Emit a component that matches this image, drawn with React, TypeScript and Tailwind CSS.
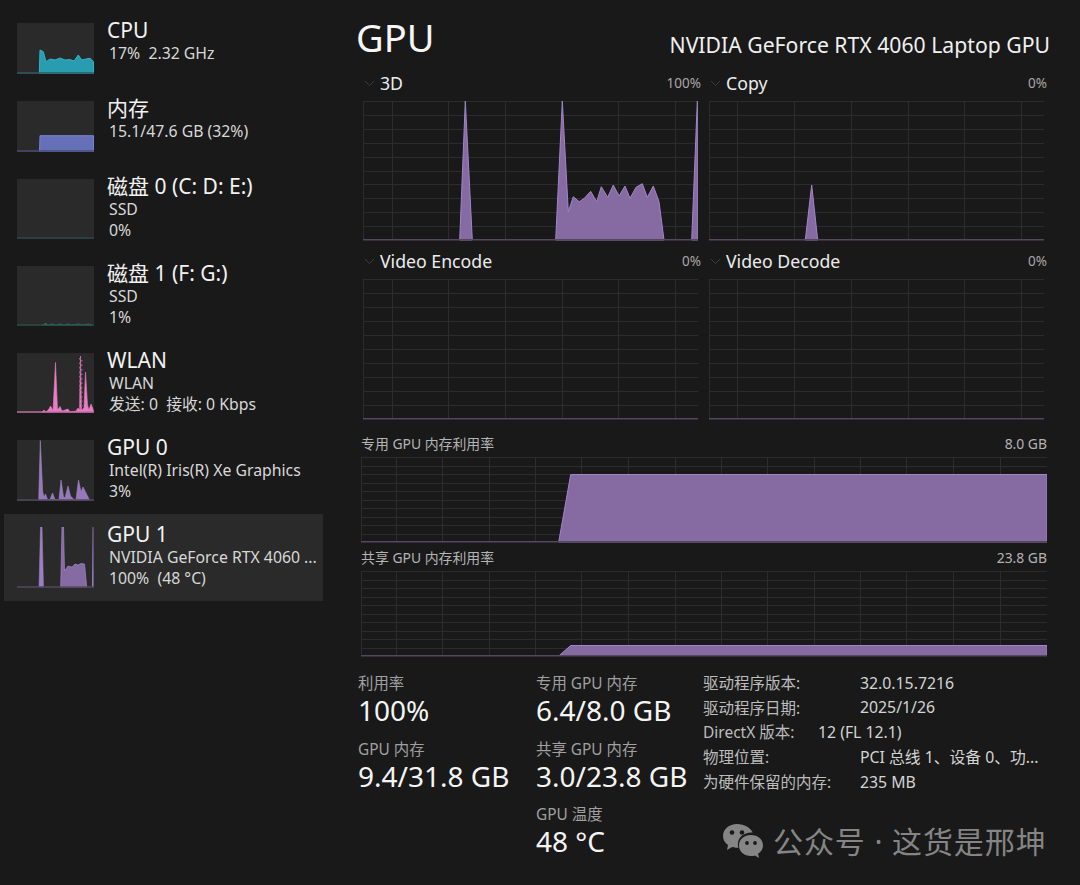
import React from "react";

const V3D = [363.5, 392.5, 448.5, 505.5, 562.5, 618.5, 675.5, 698.5];
const VCP = [709.5, 737.5, 794.5, 851.5, 908.5, 964.5, 1021.5, 1044.5];
const VMEM = [361.5, 396.5, 442.5, 489.5, 535.5, 581.5, 628.5, 675.5, 721.5, 767.5, 814.5, 860.5, 906.5, 953.5, 1000.5, 1047.5];
const hlines = (y0: number, step: number, n: number) =>
  Array.from({ length: n }, (_, i) => Math.round(y0 + step * i) + 0.5);

type Shape = string;

function Chart({ x, y, w, h, vs, hs, shapes = [] }: { x: number; y: number; w: number; h: number; vs: number[]; hs: number[]; shapes?: Shape[] }) {
  const bottom = y + h;
  return (
    <svg width={w} height={h + 1} viewBox={`${x} ${y} ${w} ${h + 1}`} className="block">
      {hs.map((v) => (
        <line key={"h" + v} x1={x} x2={x + w} y1={v} y2={v} stroke="#2c2c2c" strokeWidth="1" />
      ))}
      {vs.map((v) => (
        <line key={"v" + v} x1={v} x2={v} y1={y} y2={bottom} stroke="#2c2c2c" strokeWidth="1" />
      ))}
      {shapes.map((p, i) => (
        <polygon key={i} points={p} fill="#866ba3" stroke="#a185c8" strokeWidth="1" />
      ))}
      <line x1={x} x2={x + w} y1={bottom - 0.2} y2={bottom - 0.2} stroke="#54475f" strokeWidth="1.6" />
    </svg>
  );
}

function Thumb({ y, h, base, children }: { y: number; h: number; base: string; children?: React.ReactNode }) {
  return (
    <svg width={77} height={h} viewBox={`17 ${y} 77 ${h}`} className="block shrink-0 bg-[#2a2a2a]">
      {children}
      <line x1="17" x2="94" y1={y + h - 1} y2={y + h - 1} stroke={base} strokeWidth="1.4" />
    </svg>
  );
}

function Item({ title, lines, h, selected, thumb }: { title: string; lines: string[]; h: string; selected?: boolean; thumb: React.ReactNode }) {
  return (
    <div className={`flex pl-[13px] pt-[13px] ${h} ${selected ? "bg-[#2a2a2a]" : ""}`}>
      {thumb}
      <div className="ml-[13px] flex min-w-0 flex-col">
        <div className="-mt-[6px] h-[26px] text-[21px] leading-[26px] whitespace-nowrap text-[#f2f2f2]">{title}</div>
        {lines.map((l) => (
          <div key={l} className="ml-[2px] h-[20.5px] whitespace-nowrap text-[15.8px] leading-[20px] text-[#d8d8d8]">
            {l}
          </div>
        ))}
      </div>
    </div>
  );
}

function Chevron() {
  return (
    <svg width="11" height="7" viewBox="0 0 11 7" className="mr-[5px] ml-[1px] shrink-0">
      <polyline points="1,1 5.5,5.5 10,1" fill="none" stroke="#3c3c3c" strokeWidth="1" />
    </svg>
  );
}

function ChartHead({ label, value }: { label: string; value: string }) {
  return (
    <div className="-mr-[3px] flex h-[29px] items-center justify-between pb-[7px]">
      <div className="flex items-center text-[17.7px] text-[#ececec]">
        <Chevron />
        {label}
      </div>
      <span className="text-[13.5px] text-[#a8a8a8]">{value}</span>
    </div>
  );
}

function MemHead({ label, value, h }: { label: string; value: string; h: string }) {
  return (
    <div className={`flex ${h} items-end justify-between pb-[4px] text-[13.9px] leading-[18px] text-[#b4b4b4]`}>
      <span>{label}</span>
      <span>{value}</span>
    </div>
  );
}

function Stat({ label, value }: { label: string; value: string }) {
  return (
    <div className="h-[65.5px] whitespace-nowrap pt-[1px]">
      <div className="h-[20px] text-[15.4px] leading-[20px] text-[#a0a0a0]">{label}</div>
      <div className="h-[32px] text-[28px] leading-[32px] text-[#f4f4f4]">{value}</div>
    </div>
  );
}

function InfoRow({ label, value, w }: { label: string; value: string; w: string }) {
  return (
    <div className="flex h-[24.8px] items-center whitespace-nowrap">
      <span className={`${w} shrink-0 text-[15.5px] text-[#bdbdbd]`}>{label}</span>
      <span className="text-[15.8px] text-[#d4d4d4]">{value}</span>
    </div>
  );
}

const P3D = [
  "459.7,240 465.3,101 472.3,240",
  "555.7,240 562.3,101 568.3,211.7 573.3,196.7 579.3,201.7 584.3,198.3 590.7,191.3 596.7,201.7 601.3,186.7 607.7,197.3 613.3,185 619,196 625,186 630,198.3 636,187.3 642.3,183.7 647.3,197.3 653.3,186 659,201.7 664,240",
  "691.7,240 697.3,101 698,101 698,240",
];

export default function App() {
  return (
    <div className="relative flex h-[885px] w-[1080px] overflow-hidden bg-[#191919] font-['Noto_Sans','Noto_Sans_CJK_SC',sans-serif]">
      <nav className="ml-[4px] flex w-[319px] shrink-0 flex-col pt-[10px]">
        <Item
          title="CPU"
          lines={["17%\u00a0\u00a02.32 GHz"]}
          h="h-[78px]"
          thumb={
            <Thumb y={23} h={51} base="#2f5a60">
              <polygon
                points="39.3,74 40,50 43.3,51.7 46,61.7 50,59 55,60 60,58 65,60 70,59.5 74,61 78.3,55 81.7,60 86,59 90,58.3 93.5,61.7 93.5,74"
                fill="#2a9cb0"
                stroke="#30b4cc"
                strokeWidth="1"
              />
            </Thumb>
          }
        />
        <Item
          title="内存"
          lines={["15.1/47.6 GB (32%)"]}
          h="h-[78px]"
          thumb={
            <Thumb y={101} h={51} base="#4a4a78">
              <polygon points="39.5,152 40,135.7 93.5,135.7 93.5,152" fill="#6570b8" stroke="#7583d8" strokeWidth="1" />
            </Thumb>
          }
        />
        <Item title="磁盘 0 (C: D: E:)" lines={["SSD", "0%"]} h="h-[87px]" thumb={<Thumb y={179} h={60} base="#2a4a47" />} />
        <Item
          title="磁盘 1 (F: G:)"
          lines={["SSD", "1%"]}
          h="h-[87px]"
          thumb={
            <Thumb y={266} h={60} base="#2a4a47">
              <polygon
                points="42,325 46,323.5 48,325 52,324 56,325 60,324 64,325 68,324 72,325 78,324 84,325 88,324 92,325"
                fill="#2f8a7c"
                stroke="#2f8a7c"
                strokeWidth="0.8"
              />
            </Thumb>
          }
        />
        <Item
          title="WLAN"
          lines={["WLAN", "发送: 0\u00a0\u00a0接收: 0 Kbps"]}
          h="h-[87px]"
          thumb={
            <Thumb y={353} h={60} base="#c46aa6">
              <polygon
                points="42,412 44,410 46,412 49,409 50.5,406 52,408.5 53,411 55.5,362.5 57.5,410 60,406.5 62,411 68,409 70,412 76,411 78,408 79.5,410 80.5,356 81.5,410 84,408 85.5,372 87.5,405 89,410 91,404 93,409 93.5,412"
                fill="#e87dc4"
                stroke="#e87dc4"
                strokeWidth="0.6"
              />
              <line x1="79.7" x2="79.7" y1="358" y2="410" stroke="#a35a8c" strokeWidth="1.4" strokeDasharray="1.5 3" />
              <line x1="81.8" x2="81.8" y1="360" y2="410" stroke="#a35a8c" strokeWidth="1.4" strokeDasharray="1.5 3" />
            </Thumb>
          }
        />
        <Item
          title="GPU 0"
          lines={["Intel(R) Iris(R) Xe Graphics", "3%"]}
          h="h-[87px]"
          thumb={
            <Thumb y={440} h={61} base="#54475f">
              <polygon
                points="38.7,500 40.3,440.5 42.7,492 44,497 45.5,494 47.5,499.5 50,499.5 52.5,493 55,499.5 59,499.5 61,480 63.5,497 65,498 68,486 70.5,496 74,499.5 76,499.5 78.5,480 81,492 83,487 86,493 89.5,500"
                fill="#9579bb"
                stroke="#a185c8"
                strokeWidth="0.6"
              />
            </Thumb>
          }
        />
        <Item
          title="GPU 1"
          lines={["NVIDIA GeForce RTX 4060 ...", "100%\u00a0\u00a0(48 °C)"]}
          h="h-[87px]"
          selected
          thumb={
            <Thumb y={527} h={61} base="#54475f">
              <polygon points="39,587 40.5,527 42,527 43.5,587" fill="#9b7fc2" stroke="#a185c8" strokeWidth="0.5" />
              <polygon
                points="60.7,587 62,527 63.5,527 64.5,571 68,566 72,567 75,564 78,565 81,563.5 84.5,564 86.7,587"
                fill="#866ba3"
                stroke="#a185c8"
                strokeWidth="0.7"
              />
              <polygon points="92,587 92.6,527 93.4,527 93.6,587" fill="#9b7fc2" />
            </Thumb>
          }
        />
      </nav>

      <main className="flex w-[757px] shrink-0 flex-col">
        <div className="flex h-[72px] items-start justify-between pr-[30px] pl-[33px]">
          <h1 className="mt-[9px] text-[38px] leading-[56px] text-[#f6f6f6]">GPU</h1>
          <div className="mt-[30px] text-[21.2px] leading-[30px] whitespace-nowrap text-[#f0f0f0]">NVIDIA GeForce RTX 4060 Laptop GPU</div>
        </div>

        <div className="ml-[40px] grid w-[681px] grid-cols-[335px_335px] gap-x-[11px]">
          <div>
            <ChartHead label="3D" value="100%" />
            <Chart x={363} y={101} w={335} h={139} vs={V3D} hs={hlines(101, 13.9, 10)} shapes={P3D} />
          </div>
          <div>
            <ChartHead label="Copy" value="0%" />
            <Chart x={709} y={101} w={335} h={139} vs={VCP} hs={hlines(101, 13.9, 10)} shapes={["805.3,240 811.7,185 817.7,240"]} />
          </div>
          <div className="mt-[9px]">
            <ChartHead label="Video Encode" value="0%" />
            <Chart x={363} y={279} w={335} h={140} vs={V3D} hs={hlines(279, 14, 10)} />
          </div>
          <div className="mt-[9px]">
            <ChartHead label="Video Decode" value="0%" />
            <Chart x={709} y={279} w={335} h={140} vs={VCP} hs={hlines(279, 14, 10)} />
          </div>
        </div>

        <div className="ml-[38px] w-[686px]">
          <MemHead label="专用 GPU 内存利用率" value="8.0 GB" h="h-[37px]" />
          <Chart x={361} y={457} w={686} h={85} vs={VMEM} hs={hlines(457, 8.5, 10)} shapes={["558.7,542 570.7,474.5 1047,474.5 1047,542"]} />
          <MemHead label="共享 GPU 内存利用率" value="23.8 GB" h="h-[28px]" />
          <Chart x={361} y={571} w={686} h={85} vs={VMEM} hs={hlines(571, 8.5, 10)} shapes={["559.3,655.5 570.7,645.5 1047,645.5 1047,655.5"]} />
        </div>

        <div className="mt-[16px] ml-[35px] flex">
          <div className="w-[178px]">
            <Stat label="利用率" value="100%" />
            <Stat label="GPU 内存" value="9.4/31.8 GB" />
          </div>
          <div className="w-[167px]">
            <Stat label="专用 GPU 内存" value="6.4/8.0 GB" />
            <Stat label="共享 GPU 内存" value="3.0/23.8 GB" />
            <Stat label="GPU 温度" value="48 °C" />
          </div>
          <div className="-mt-[2px] w-[345px]">
            <InfoRow label="驱动程序版本:" value="32.0.15.7216" w="w-[157px]" />
            <InfoRow label="驱动程序日期:" value="2025/1/26" w="w-[157px]" />
            <InfoRow label="DirectX 版本:" value="12 (FL 12.1)" w="w-[115px]" />
            <InfoRow label="物理位置:" value="PCI 总线 1、设备 0、功..." w="w-[157px]" />
            <InfoRow label="为硬件保留的内存:" value="235 MB" w="w-[157px]" />
          </div>
        </div>
      </main>

      <div className="absolute top-[818px] left-[722px] flex h-[46px] items-center whitespace-nowrap text-[30px] tracking-[0.9px] text-[#858585]">
        <svg width="42" height="36" viewBox="0 0 42 36" className="mr-[9px] shrink-0">
          <path d="M15 1C7 1 1 6 1 13c0 4 2 7 5 9l-1 5 5-3c2 .6 3.500 .8 5 .8.500 0 1 0 1.500-.1-.4-1.200-.6-2.400-.6-3.700 0-6.500 6-11.500 13.300-11.500h1.500C28.500 5 22.500 1 15 1z" fill="#858585" />
          <circle cx="10" cy="9.500" r="2.300" fill="#191919" />
          <circle cx="20" cy="9.500" r="2.300" fill="#191919" />
          <path d="M29 12c-7 0-12 4.500-12 10.500S22 33 29 33c1.500 0 2.800-.2 4-.6l4 2.600-1-4.200c3-2 5-4.900 5-8.300C41 16.500 36 12 29 12z" fill="#858585" />
          <circle cx="25" cy="20" r="1.900" fill="#191919" />
          <circle cx="33" cy="20" r="1.900" fill="#191919" />
        </svg>
        公众号 · 这货是邢坤
      </div>
    </div>
  );
}
